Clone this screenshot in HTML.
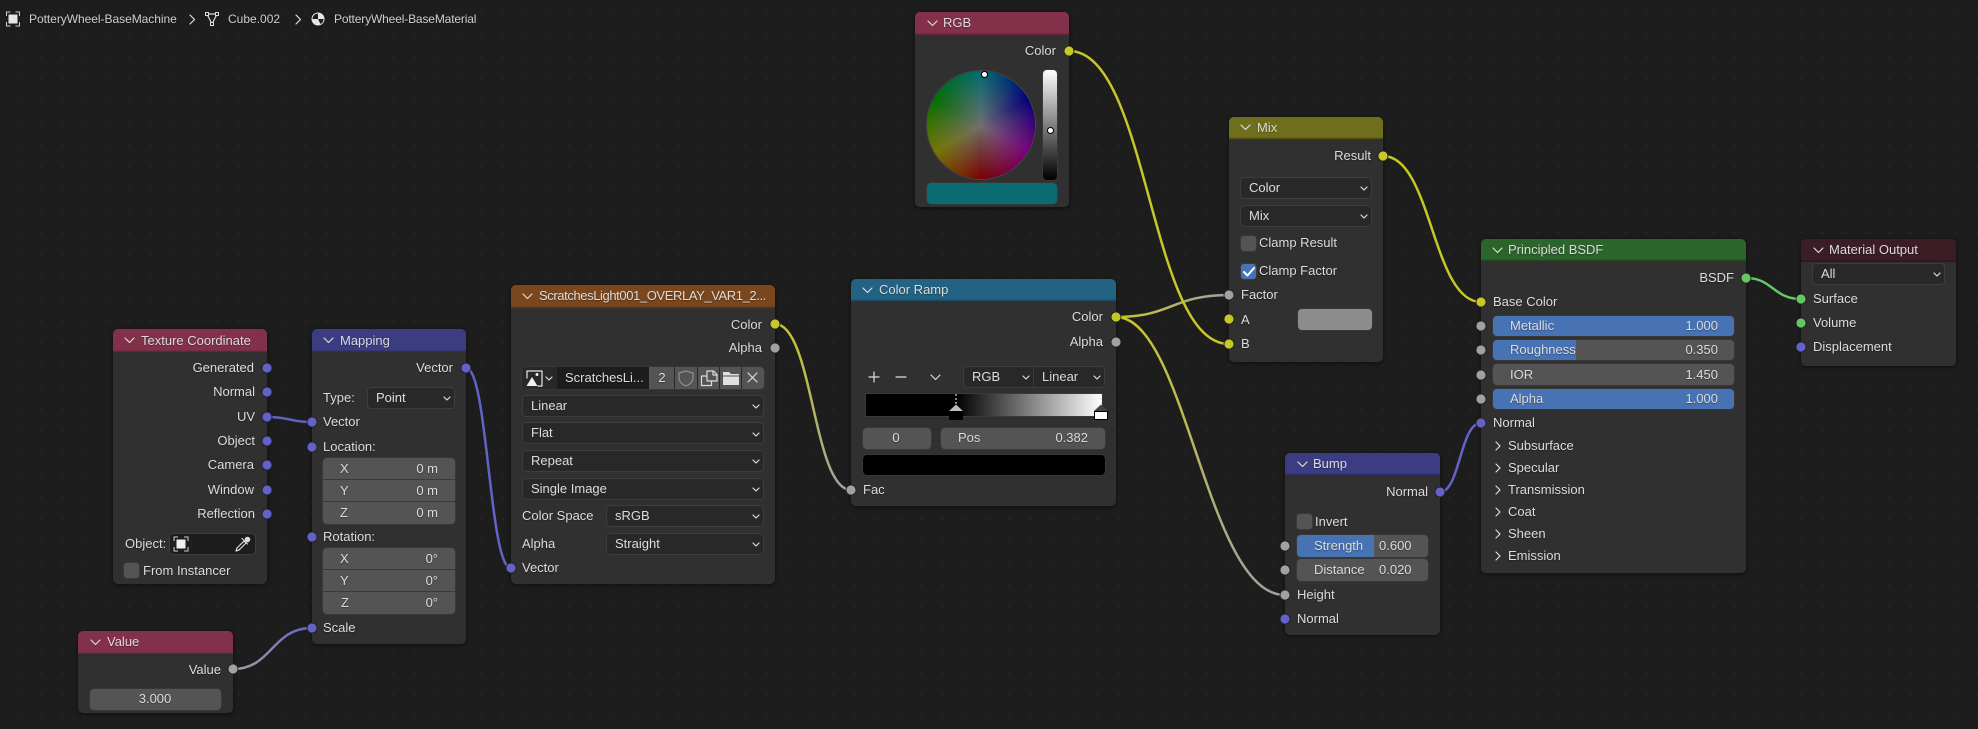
<!DOCTYPE html>
<html><head><meta charset="utf-8"><title>Shader Editor</title>
<style>
html,body{margin:0;padding:0;background:#1d1d1d}
#p{position:relative;width:1978px;height:729px;overflow:hidden;background-color:#1d1d1d;background-image:radial-gradient(circle,#252525 0.8px,transparent 1.2px);background-size:22px 22px;background-position:8px 2px;font:13px/16px "Liberation Sans",sans-serif;color:#dcdcdc}
svg.a{position:absolute;left:0;top:0}
.n{position:absolute;background:#303030;border-radius:5px;box-shadow:0 1px 5px rgba(0,0,0,.55);box-sizing:border-box}
.h{position:absolute;left:0;right:0;top:0;border-radius:5px 5px 0 0;box-shadow:inset 0 -1.5px 0 rgba(0,0,0,.22)}
.l,.r,.c{position:absolute;white-space:nowrap;text-shadow:0 1px 1px rgba(0,0,0,.35)}
.c{transform:translateX(-50%)}
.d{position:absolute;box-sizing:border-box;background:#282828;border:1px solid #3d3d3d;border-radius:4px;padding-left:8px;white-space:nowrap;line-height:20px}
.f{position:absolute;box-sizing:border-box;background:#545454;border-radius:4px;box-shadow:0 0 0 1px #383838}
.b{position:absolute;background:#4772b3}
.k{position:absolute;width:15px;height:15px;background:#545454;border-radius:3px;box-shadow:0 0 0 1px #3a3a3a}
.hr{position:absolute;height:1px;background:#3a3a3a}
</style></head><body><div id="p">

<svg class="a" width="1978" height="729" fill="none" stroke-width="2.5" stroke-linecap="round">
<defs>
<linearGradient id="g1" gradientUnits="userSpaceOnUse" x1="233" y1="669" x2="312" y2="628"><stop offset="0" stop-color="#a1a1a1"/><stop offset="1" stop-color="#6363c7"/></linearGradient>
<linearGradient id="g2" gradientUnits="userSpaceOnUse" x1="775" y1="324" x2="851" y2="490"><stop offset="0" stop-color="#c7c729"/><stop offset="1" stop-color="#a1a1a1"/></linearGradient>
<linearGradient id="g3" gradientUnits="userSpaceOnUse" x1="1116" y1="0" x2="1229" y2="0"><stop offset="0" stop-color="#c7c729"/><stop offset="1" stop-color="#a1a1a1"/></linearGradient>
<linearGradient id="g4" gradientUnits="userSpaceOnUse" x1="1116" y1="317" x2="1285" y2="595"><stop offset="0" stop-color="#c7c729"/><stop offset="1" stop-color="#a1a1a1"/></linearGradient>
</defs>
<path stroke="#6363c7" d="M267 417C290 417 290 422 312 422"/>
<path stroke="url(#g1)" d="M233 669C272 669 272 628 312 628"/>
<path stroke="#6363c7" d="M466 368C488 368 489 568 511 568"/>
<path stroke="url(#g2)" d="M775 324C813 324 813 490 851 490"/>
<path stroke="url(#g3)" d="M1116 317C1172 317 1172 295 1229 295"/>
<path stroke="url(#g4)" d="M1116 317C1186 317 1206 595 1285 595"/>
<path stroke="#c7c729" d="M1069 51C1149 51 1149 344 1229 344"/>
<path stroke="#c7c729" d="M1383 156C1432 156 1432 302 1481 302"/>
<path stroke="#6363c7" d="M1440 492C1460 492 1460 423 1481 423"/>
<path stroke="#63c763" d="M1746 278C1773 278 1773 299 1801 299"/>
</svg>

<!-- breadcrumbs -->
<span class="l" style="left:29px;top:11px;font-size:12px;color:#cfcfcf;letter-spacing:-.04px">PotteryWheel-BaseMachine</span>
<span class="l" style="left:228px;top:11px;font-size:12px;color:#cfcfcf">Cube.002</span>
<span class="l" style="left:334px;top:11px;font-size:12px;color:#cfcfcf;letter-spacing:-.15px">PotteryWheel-BaseMaterial</span>

<!-- Texture Coordinate -->
<div class="n" style="left:113px;top:329px;width:154px;height:255px"><div class="h" style="height:23px;background:#83314a"></div></div>
<span class="l" style="left:141px;top:333px">Texture Coordinate</span>
<span class="r" style="right:1724px;top:360px">Generated</span>
<span class="r" style="right:1723px;top:384px">Normal</span>
<span class="r" style="right:1723px;top:409px">UV</span>
<span class="r" style="right:1723px;top:433px">Object</span>
<span class="r" style="right:1724px;top:457px">Camera</span>
<span class="r" style="right:1724px;top:482px">Window</span>
<span class="r" style="right:1723px;top:506px">Reflection</span>
<span class="l" style="left:125px;top:536px">Object:</span>
<div class="d" style="left:169px;top:533px;width:87px;height:22px;background:#1d1d1d"></div>
<div class="k" style="left:124px;top:563px"></div>
<span class="l" style="left:143px;top:563px">From Instancer</span>

<!-- Mapping -->
<div class="n" style="left:312px;top:329px;width:154px;height:315px"><div class="h" style="height:23px;background:#3c3c83"></div></div>
<span class="l" style="left:340px;top:333px">Mapping</span>
<span class="r" style="right:1525px;top:360px">Vector</span>
<span class="l" style="left:323px;top:390px">Type:</span>
<div class="d" style="left:367px;top:387px;width:88px;height:22px">Point</div>
<span class="l" style="left:323px;top:414px">Vector</span>
<span class="l" style="left:323px;top:439px">Location:</span>
<div class="f" style="left:323px;top:458px;width:132px;height:66px"></div>
<div class="hr" style="left:323px;top:479px;width:132px"></div><div class="hr" style="left:323px;top:501px;width:132px"></div>
<span class="l" style="left:340px;top:461px">X</span><span class="r" style="right:1540px;top:461px">0 m</span>
<span class="l" style="left:340px;top:483px">Y</span><span class="r" style="right:1540px;top:483px">0 m</span>
<span class="l" style="left:340px;top:505px">Z</span><span class="r" style="right:1540px;top:505px">0 m</span>
<span class="l" style="left:323px;top:529px">Rotation:</span>
<div class="f" style="left:323px;top:548px;width:132px;height:66px"></div>
<div class="hr" style="left:323px;top:569px;width:132px"></div><div class="hr" style="left:323px;top:591px;width:132px"></div>
<span class="l" style="left:340px;top:551px">X</span><span class="r" style="right:1540px;top:551px">0°</span>
<span class="l" style="left:340px;top:573px">Y</span><span class="r" style="right:1540px;top:573px">0°</span>
<span class="l" style="left:341px;top:595px">Z</span><span class="r" style="right:1540px;top:595px">0°</span>
<span class="l" style="left:323px;top:620px">Scale</span>

<!-- Value -->
<div class="n" style="left:78px;top:631px;width:155px;height:82px"><div class="h" style="height:23px;background:#83314a"></div></div>
<span class="l" style="left:107px;top:634px">Value</span>
<span class="r" style="right:1757px;top:662px">Value</span>
<div class="f" style="left:90px;top:689px;width:131px;height:21px"></div>
<span class="c" style="left:155px;top:691px">3.000</span>

<!-- Image Texture -->
<div class="n" style="left:511px;top:285px;width:264px;height:299px"><div class="h" style="height:23px;background:#79461d"></div></div>
<span class="l" style="left:539px;top:288px;letter-spacing:-.4px">ScratchesLight001_OVERLAY_VAR1_2...</span>
<span class="r" style="right:1216px;top:317px">Color</span>
<span class="r" style="right:1216px;top:340px">Alpha</span>
<div class="f" style="left:522px;top:367px;width:242px;height:22px;background:#282828"></div>
<div class="b" style="left:557px;top:367px;width:92px;height:22px;background:#1d1d1d"></div>
<span class="l" style="left:565px;top:370px">ScratchesLi...</span>
<div class="b" style="left:649px;top:367px;width:25px;height:22px;background:#545454"></div>
<span class="c" style="left:662px;top:370px">2</span>
<div class="b" style="left:675px;top:367px;width:22px;height:22px;background:#545454"></div>
<div class="b" style="left:698px;top:367px;width:21px;height:22px;background:#545454"></div>
<div class="b" style="left:720px;top:367px;width:21px;height:22px;background:#545454"></div>
<div class="b" style="left:742px;top:367px;width:22px;height:22px;background:#545454;border-radius:0 4px 4px 0"></div>
<div class="d" style="left:522px;top:395px;width:242px;height:22px">Linear</div>
<div class="d" style="left:522px;top:422px;width:242px;height:22px">Flat</div>
<div class="d" style="left:522px;top:450px;width:242px;height:22px">Repeat</div>
<div class="d" style="left:522px;top:478px;width:242px;height:22px">Single Image</div>
<span class="l" style="left:522px;top:508px">Color Space</span>
<div class="d" style="left:606px;top:505px;width:158px;height:22px">sRGB</div>
<span class="l" style="left:522px;top:536px">Alpha</span>
<div class="d" style="left:606px;top:533px;width:158px;height:22px">Straight</div>
<span class="l" style="left:522px;top:560px">Vector</span>

<!-- Color Ramp -->
<div class="n" style="left:851px;top:279px;width:265px;height:227px"><div class="h" style="height:22px;background:#246283"></div></div>
<span class="l" style="left:879px;top:282px">Color Ramp</span>
<span class="r" style="right:875px;top:309px">Color</span>
<span class="r" style="right:875px;top:334px">Alpha</span>
<div class="d" style="left:963px;top:366px;width:142px;height:22px">RGB</div>
<div class="hr" style="left:1033px;top:366px;width:1px;height:22px"></div>
<span class="l" style="left:1042px;top:369px">Linear</span>
<div class="b" style="left:866px;top:394px;width:236px;height:22px;background:linear-gradient(90deg,#000 0,#000 38.2%,#fff 100%);box-shadow:0 0 0 1px #3a3a3a"></div>
<div class="f" style="left:863px;top:428px;width:68px;height:21px"></div>
<span class="c" style="left:896px;top:430px">0</span>
<div class="f" style="left:941px;top:428px;width:164px;height:21px"></div>
<span class="l" style="left:958px;top:430px">Pos</span>
<span class="r" style="right:890px;top:430px">0.382</span>
<div class="f" style="left:863px;top:455px;width:242px;height:20px;background:#000"></div>
<span class="l" style="left:863px;top:482px">Fac</span>

<!-- RGB -->
<div class="n" style="left:915px;top:12px;width:154px;height:195px"><div class="h" style="height:23px;background:#83314a"></div></div>
<span class="l" style="left:943px;top:15px">RGB</span>
<span class="r" style="right:922px;top:43px">Color</span>
<div class="b" style="left:927px;top:71px;width:108px;height:108px;border-radius:50%;background:radial-gradient(circle closest-side,#6f6f6f 0,rgba(111,111,111,.72) 25%,rgba(111,111,111,.42) 55%,rgba(111,111,111,0) 100%),conic-gradient(#006b72,#00007a 60deg,#7a007a 120deg,#7a0000 180deg,#757500 240deg,#006e00 300deg,#006b72);box-shadow:0 0 0 1px #444"></div>
<div class="b" style="left:1043px;top:70px;width:14px;height:110px;border-radius:4px;background:linear-gradient(#fff,#000);box-shadow:0 0 0 1px #3a3a3a"></div>
<div class="f" style="left:927px;top:183px;width:130px;height:21px;background:#0a6b72"></div>

<!-- Mix -->
<div class="n" style="left:1229px;top:117px;width:154px;height:245px"><div class="h" style="height:22px;background:#6e6e1d"></div></div>
<span class="l" style="left:1257px;top:120px">Mix</span>
<span class="r" style="right:607px;top:148px">Result</span>
<div class="d" style="left:1240px;top:177px;width:132px;height:22px">Color</div>
<div class="d" style="left:1240px;top:205px;width:132px;height:22px">Mix</div>
<div class="k" style="left:1241px;top:236px"></div>
<span class="l" style="left:1259px;top:235px">Clamp Result</span>
<div class="k" style="left:1241px;top:264px;background:#4772b3"></div>
<span class="l" style="left:1259px;top:263px">Clamp Factor</span>
<span class="l" style="left:1241px;top:287px">Factor</span>
<span class="l" style="left:1241px;top:312px">A</span>
<div class="f" style="left:1298px;top:309px;width:74px;height:21px;background:#8c8c8c"></div>
<span class="l" style="left:1241px;top:336px">B</span>

<!-- Bump -->
<div class="n" style="left:1285px;top:453px;width:155px;height:182px"><div class="h" style="height:22px;background:#3c3c83"></div></div>
<span class="l" style="left:1313px;top:456px">Bump</span>
<span class="r" style="right:550px;top:484px">Normal</span>
<div class="k" style="left:1297px;top:514px"></div>
<span class="l" style="left:1315px;top:514px">Invert</span>
<div class="f" style="left:1297px;top:535px;width:131px;height:22px"></div>
<div class="b" style="left:1297px;top:535px;width:77px;height:22px;border-radius:4px 0 0 4px"></div>
<span class="l" style="left:1314px;top:538px">Strength</span><span class="l" style="left:1379px;top:538px">0.600</span>
<div class="f" style="left:1297px;top:559px;width:131px;height:22px"></div>
<span class="l" style="left:1314px;top:562px">Distance</span><span class="l" style="left:1379px;top:562px">0.020</span>
<span class="l" style="left:1297px;top:587px">Height</span>
<span class="l" style="left:1297px;top:611px">Normal</span>

<!-- Principled -->
<div class="n" style="left:1481px;top:239px;width:265px;height:334px"><div class="h" style="height:22px;background:#2b652b"></div></div>
<span class="l" style="left:1508px;top:242px">Principled BSDF</span>
<span class="r" style="right:244px;top:270px">BSDF</span>
<span class="l" style="left:1493px;top:294px">Base Color</span>
<div class="f" style="left:1493px;top:316px;width:241px;height:20px;background:#4772b3"></div>
<span class="l" style="left:1510px;top:318px">Metallic</span><span class="r" style="right:260px;top:318px">1.000</span>
<div class="f" style="left:1493px;top:340px;width:241px;height:20px"></div>
<div class="b" style="left:1493px;top:340px;width:83px;height:20px;border-radius:4px 0 0 4px"></div>
<span class="l" style="left:1510px;top:342px">Roughness</span><span class="r" style="right:260px;top:342px">0.350</span>
<div class="f" style="left:1493px;top:364px;width:241px;height:21px"></div>
<span class="l" style="left:1510px;top:367px">IOR</span><span class="r" style="right:260px;top:367px">1.450</span>
<div class="f" style="left:1493px;top:389px;width:241px;height:20px;background:#4772b3"></div>
<span class="l" style="left:1510px;top:391px">Alpha</span><span class="r" style="right:260px;top:391px">1.000</span>
<span class="l" style="left:1493px;top:415px">Normal</span>
<span class="l" style="left:1508px;top:438px">Subsurface</span>
<span class="l" style="left:1508px;top:460px">Specular</span>
<span class="l" style="left:1508px;top:482px">Transmission</span>
<span class="l" style="left:1508px;top:504px">Coat</span>
<span class="l" style="left:1508px;top:526px">Sheen</span>
<span class="l" style="left:1508px;top:548px">Emission</span>

<!-- Material Output -->
<div class="n" style="left:1801px;top:239px;width:155px;height:127px"><div class="h" style="height:23px;background:#3c1d26"></div></div>
<span class="l" style="left:1829px;top:242px">Material Output</span>
<div class="d" style="left:1812px;top:263px;width:133px;height:22px">All</div>
<span class="l" style="left:1813px;top:291px">Surface</span>
<span class="l" style="left:1813px;top:315px">Volume</span>
<span class="l" style="left:1813px;top:339px">Displacement</span>

<!-- Icons / sockets overlay -->
<svg class="a" width="1978" height="729" fill="none">
<g stroke="#dcdcdc" stroke-width="1.2" stroke-linecap="round" stroke-linejoin="round">
<!-- header chevrons -->
<path d="M125 338l4.5 4.5 4.5-4.5M324 338l4.5 4.5 4.5-4.5M91 640l4.5 4.5 4.5-4.5M523 294l4.5 4.5 4.5-4.5M863 288l4.5 4.5 4.5-4.5M928 21l4.5 4.5 4.5-4.5M1241 125l4.5 4.5 4.5-4.5M1298 462l4.5 4.5 4.5-4.5M1493 248l4.5 4.5 4.5-4.5M1814 248l4.5 4.5 4.5-4.5"/>
<!-- dropdown chevrons -->
<path d="M444 397l3 3 3-3M753 405l3 3 3-3M753 433l3 3 3-3M753 460l3 3 3-3M753 488l3 3 3-3M753 515l3 3 3-3M753 543l3 3 3-3M1023 376l3 3 3-3M1094 376l3 3 3-3M1361 187l3 3 3-3M1361 215l3 3 3-3M1934 273l3 3 3-3M546 377l3 3 3-3"/>
<!-- panel chevrons -->
<path d="M1496 442l4 4-4 4M1496 464l4 4-4 4M1496 486l4 4-4 4M1496 508l4 4-4 4M1496 530l4 4-4 4M1496 552l4 4-4 4"/>
<!-- ramp buttons -->
<path d="M874 372v10M869 377h10M896 377h10M931 375l4.500 4.500 4.500-4.500"/>
<!-- breadcrumb chevrons -->
<path d="M190 15l4.500 4.500-4.500 4.500M296 15l4.500 4.500-4.500 4.500"/>
<!-- checkmark -->
<path d="M1244 272l3.500 3.500 6.500-7.500" stroke="#fff" stroke-width="2"/>
<!-- image row icons -->
<path d="M686 371l7 2v5c0 4-3.500 6.500-7 8-3.500-1.500-7-4-7-8v-5z" stroke="#8f8f8f"/>
<path d="M707 371h6.500l3.500 3.500v6.500h-10zM713 371v4h4M706 376h-4.500v9.500h10v-4" stroke="#dcdcdc"/>
<path d="M748 373l9 9M757 373l-9 9"/>
<path d="M527 378v-7h15v15h-4" stroke="#e6e6e6"/>
<!-- eyedropper -->
<path d="M236 551l1-3 7-7 2 2-7 7zM242 538.500l5.500 5.500" stroke-width="1.200"/>
</g>
<!-- image icon -->
<path d="M526.500 386l5.500-9 5.500 9z" fill="#f0f0f0"/><circle cx="537" cy="374.500" r="1.500" fill="#f0f0f0"/>
<!-- folder -->
<path d="M723 372h6l2 2h8v11h-16z" fill="#e0e0e0"/><path d="M723 376h16" stroke="#545454"/>
<circle cx="247.500" cy="539.500" r="2.800" fill="#dcdcdc"/>
<!-- object icon in Tex Coord -->
<rect x="176.500" y="539.500" width="9" height="9" fill="#eee"/>
<path d="M174 541v-4h4M184 537h4v4M188 547v4h-4M178 551h-4v-4" stroke="#cfcfcf"/>
<!-- breadcrumb icons -->
<rect x="8.500" y="14.500" width="9" height="9" fill="#e6e6e6"/>
<path d="M6.500 16v-4h4M15.500 12h4v4M19.500 22v4h-4M10.500 26h-4v-4" stroke="#cfcfcf"/>
<path d="M207 14h10l-5 10z" stroke="#dcdcdc" stroke-width="1.200"/>
<g fill="#1d1d1d" stroke="#dcdcdc"><rect x="205.500" y="12.500" width="3" height="3"/><rect x="215.500" y="12.500" width="3" height="3"/><rect x="210.500" y="22.500" width="3" height="3"/></g>
<circle cx="318" cy="19" r="6.500" fill="#e6e6e6"/><path d="M318 13.500a5.500 5.500 0 0 0-5.500 5.500h5.500zM318 19h5.500a5.500 5.500 0 0 1-3 5z" fill="#1d1d1d"/>
<!-- ramp handles -->
<path d="M956 394v11" stroke="#fff" stroke-dasharray="2 2"/>
<path d="M1101.500 394v11" stroke="#ddd" stroke-dasharray="2 2"/>
<path d="M949 411l7-6.500 7 6.500z" fill="#bbb"/>
<rect x="949" y="411" width="14" height="9" fill="#000"/>
<path d="M1094 411l7-6.500 7 6.500z" fill="#444"/>
<rect x="1094.500" y="411.500" width="13" height="8" fill="#fff" stroke="#000"/>
<!-- colour picker dots -->
<circle cx="984.500" cy="74.500" r="3" fill="#fff" stroke="#000"/>
<circle cx="1050.500" cy="130.500" r="3" fill="#fff" stroke="#000"/>
<!-- sockets -->
<g stroke="#1d1d1d" stroke-width=".8">
<g fill="#6363c7">
<circle cx="267" cy="368" r="5"/><circle cx="267" cy="392" r="5"/><circle cx="267" cy="417" r="5"/><circle cx="267" cy="441" r="5"/><circle cx="267" cy="465" r="5"/><circle cx="267" cy="490" r="5"/><circle cx="267" cy="514" r="5"/>
<circle cx="466" cy="368" r="5"/><circle cx="312" cy="422" r="5"/><circle cx="312" cy="447" r="5"/><circle cx="312" cy="537" r="5"/><circle cx="312" cy="628" r="5"/>
<circle cx="511" cy="568" r="5"/><circle cx="1440" cy="492" r="5"/><circle cx="1285" cy="619" r="5"/><circle cx="1481" cy="423" r="5"/><circle cx="1801" cy="347" r="5"/>
</g>
<g fill="#a1a1a1">
<circle cx="233" cy="669" r="5"/><circle cx="775" cy="348" r="5"/><circle cx="1116" cy="342" r="5"/><circle cx="851" cy="490" r="5"/><circle cx="1229" cy="295" r="5"/>
<circle cx="1285" cy="546" r="5"/><circle cx="1285" cy="570" r="5"/><circle cx="1285" cy="595" r="5"/>
<circle cx="1481" cy="326" r="5"/><circle cx="1481" cy="350" r="5"/><circle cx="1481" cy="375" r="5"/><circle cx="1481" cy="399" r="5"/>
</g>
<g fill="#c7c729">
<circle cx="775" cy="324" r="5"/><circle cx="1116" cy="317" r="5"/><circle cx="1069" cy="51" r="5"/><circle cx="1383" cy="156" r="5"/><circle cx="1229" cy="319" r="5"/><circle cx="1229" cy="344" r="5"/><circle cx="1481" cy="302" r="5"/>
</g>
<g fill="#63c763">
<circle cx="1746" cy="278" r="5"/><circle cx="1801" cy="299" r="5"/><circle cx="1801" cy="323" r="5"/>
</g>
</g>
</svg>
</div></body></html>
